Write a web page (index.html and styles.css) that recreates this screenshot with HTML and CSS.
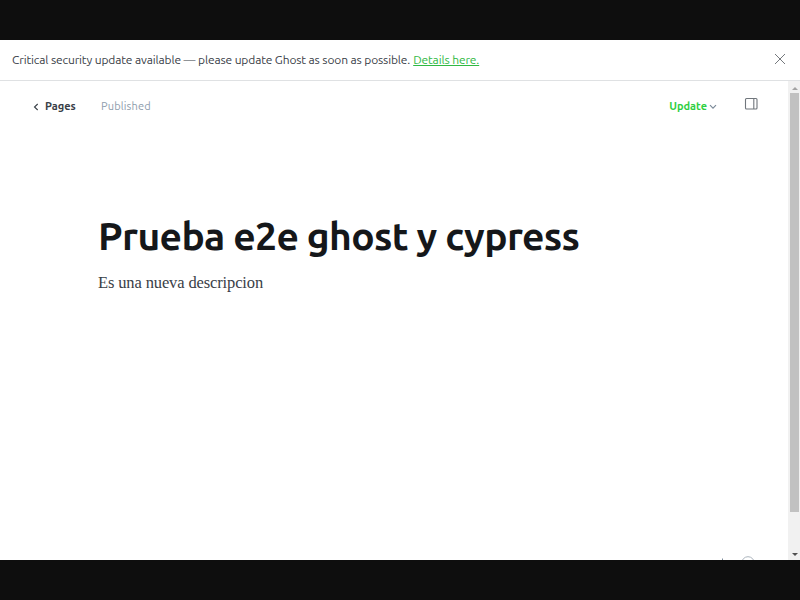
FILE: index.html
```html
<!DOCTYPE html>
<html lang="es">
<head>
<meta charset="utf-8">
<title>Ghost</title>
<link rel="stylesheet" href="styles.css">
</head>
<body>
<div class="app">
  <div class="alert">
    <div class="alert-text"><span class="alert-message">Critical security update available — please update Ghost as soon as possible.</span><a class="alert-link">Details here.</a></div>
    <svg class="close" width="12" height="12" viewBox="0 0 12 12"><path d="M1 1l10 10M11 1L1 11"/></svg>
  </div>
  <div class="workspace">
    <main class="editor">
      <header class="toolbar">
        <svg class="back" width="6" height="8" viewBox="0 0 6 8"><path d="M4.7 1L1.5 4l3.2 3"/></svg>
        <span class="pages">Pages</span>
        <span class="status">Published</span>
        <span class="update">Update</span>
        <svg class="chevron" width="8" height="6" viewBox="0 0 8 6"><path d="M1 1.2l3 3 3-3"/></svg>
        <svg class="panel" width="14" height="14" viewBox="0 0 14 14"><rect x="1.5" y="1.5" width="11.5" height="10.5" rx="1"/><path d="M9.8 1.5v10.5"/></svg>
      </header>
      <article class="post">
        <h1><span class="title">Prueba e2e ghost y cypress</span></h1>
        <p><span class="body-text">Es una nueva descripcion</span></p>
      </article>
      <footer class="footer">
        <svg width="36" height="4" viewBox="0 0 36 4"><path class="tick" d="M3.5 2.5v1.5"/><circle cx="29" cy="7" r="6.3"/></svg>
      </footer>
    </main>
    <div class="scrollbar">
      <svg class="arrow-up" width="6" height="3" viewBox="0 0 6 3"><path d="M0 3l3-3 3 3z"/></svg>
      <div class="thumb"></div>
      <svg class="arrow-down" width="6" height="3" viewBox="0 0 6 3"><path d="M0 0h6L3 3z"/></svg>
    </div>
  </div>
</div>
</body>
</html>
```
FILE: styles.css
```css
* { box-sizing: border-box; }
body {
  margin: 0;
  height: 600px;
  padding: 40px 0;
  overflow: hidden;
  background: #0e0e0e;
  font-family: Ubuntu, "Noto Sans", sans-serif;
}
svg { display: block; flex: none; fill: none; }
.app { height: 520px; display: flex; flex-direction: column; background: #fff; }
.alert {
  height: 41px;
  padding: 0 14px 2px 12px;
  display: flex;
  align-items: center;
  justify-content: space-between;
  border-bottom: 1px solid #dfe1e3;
  color: #394047;
  font-size: 12px;
  white-space: nowrap;
}
.alert-text { display: flex; gap: 3px; padding-top: 1px; }
.alert-message { letter-spacing: -0.13px; }
.alert-link { color: #30b943; text-decoration: underline; letter-spacing: -0.12px; }
.close { stroke: #75797d; stroke-width: 1; }
.workspace { flex: 1; display: flex; }
.editor { flex: 1; display: flex; flex-direction: column; overflow: hidden; }
.toolbar {
  height: 50px;
  padding: 0 30px 0 33px;
  display: flex;
  align-items: center;
  font-size: 11px;
  line-height: 16px;
  white-space: nowrap;
}
.back { margin-top: 1px; stroke: #394047; stroke-width: 1.1; }
.pages { width: 56px; margin-left: 6px; color: #394047; font-weight: 700; }
.status { color: #8e9cac; letter-spacing: 0.15px; }
.update { margin-left: auto; color: #30cf43; font-weight: 600; }
.chevron { margin: 2px 27px 0 2px; stroke: #7c8b9a; stroke-width: 1.2; }
.panel { margin-top: -4px; stroke: #70767c; stroke-width: 1.1; }
.post { flex: 1; padding: 78px 98px 0; white-space: nowrap; }
h1 { margin: 0; color: #15171a; font-size: 39px; font-weight: 700; line-height: 54px; letter-spacing: -0.65px; }
p { margin: 7px 0 0; color: #394047; font: 16.5px/26px "Liberation Serif", serif; letter-spacing: -0.13px; }
.footer { display: flex; justify-content: flex-end; padding-right: 33px; }
.footer svg { stroke: #abb4bd; stroke-width: 1; }
.footer .tick { stroke: #7c8b9a; }
.scrollbar {
  width: 12px;
  padding: 6px 1px 4px 2px;
  display: flex;
  flex-direction: column;
  align-items: center;
  background: #f1f1f1;
}
.thumb { width: 9px; height: 419px; margin-top: 3px; background: #c1c1c1; }
.arrow-up { fill: #a3a3a3; }
.arrow-down { margin-top: auto; fill: #505050; }
```
